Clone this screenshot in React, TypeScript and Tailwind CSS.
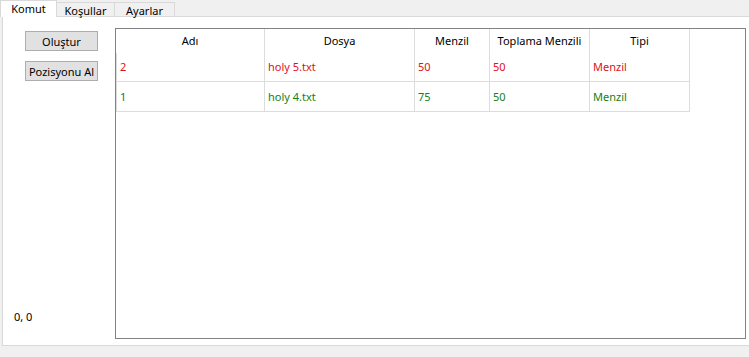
import React from "react";

const cols = [149, 150, 75, 100, 100];
const headers = ["Adı", "Dosya", "Menzil", "Toplama Menzili", "Tipi"];
const rows = [
  { color: "text-[#e0101a]", cells: ["2", "holy 5.txt", "50", "50", "Menzil"], h: "h-[29px]" },
  { color: "text-[#168016]", cells: ["1", "holy 4.txt", "75", "50", "Menzil"], h: "h-[30px]" },
];

export default function App() {
  return (
    <div
      className="w-[749px] h-[357px] bg-[#f0f0f0] flex flex-col overflow-hidden text-[11px] text-black"
      style={{ fontFamily: '"Noto Sans", "Open Sans", sans-serif' }}
    >
      <div className="h-[17px] flex items-end relative z-10 shrink-0">
        <div className="w-[57px] h-[17px] bg-white border-t border-l border-r border-[#d9d9d9] flex items-center justify-center leading-none pb-[2px]">
          Komut
        </div>
        <div className="w-[58px] h-[15px] border-t border-r border-[#d9d9d9] flex items-center justify-center leading-none">
          Koşullar
        </div>
        <div className="w-[60px] h-[15px] border-t border-r border-[#d9d9d9] flex items-center justify-center leading-none">
          Ayarlar
        </div>
      </div>
      <div className="ml-[2px] -mt-px h-[330px] w-[760px] bg-white border border-[#d9d9d9] flex shrink-0">
        <div className="w-[112px] flex flex-col pt-[14px] pb-[23px] pl-[11px]">
          <div className="ml-[11px] w-[73px] h-[20px] bg-[#e1e1e1] border border-[#adadad] flex items-center justify-center leading-none">
            Oluştur
          </div>
          <div className="ml-[11px] mt-[10px] w-[73px] h-[20px] bg-[#e1e1e1] border border-[#adadad] flex items-center justify-center leading-none">
            Pozisyonu Al
          </div>
          <div className="mt-auto leading-none">0, 0</div>
        </div>
        <div className="mt-[11px] w-[631px] h-[311px] border border-[#828282] bg-white flex flex-col">
          <div className="flex h-[24px]">
            {headers.map((h, i) => (
              <div
                key={h}
                style={{ width: cols[i] }}
                className="border-r border-[#dcdcdc] flex items-center justify-center leading-none pb-[1px]"
              >
                {h}
              </div>
            ))}
          </div>
          {rows.map((r, ri) => (
            <div key={ri} className={`flex ${r.h} ${r.color}`}>
              {r.cells.map((c, i) => (
                <div
                  key={i}
                  style={{ width: cols[i] }}
                  className={`border-r border-b border-[#dcdcdc] flex items-center pl-[3px] pb-[1px] leading-none ${
                    i === 0 ? "border-l" : ""
                  }`}
                >
                  {c}
                </div>
              ))}
            </div>
          ))}
        </div>
      </div>
    </div>
  );
}
